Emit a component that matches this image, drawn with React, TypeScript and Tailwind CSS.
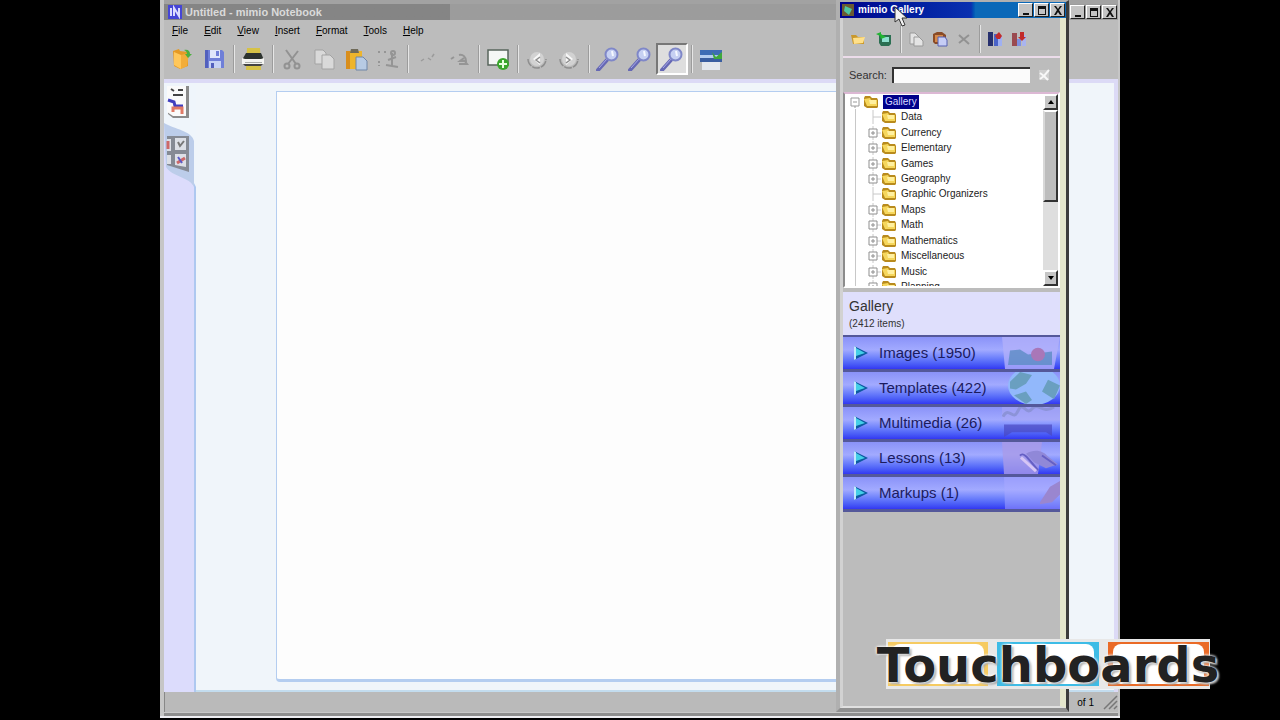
import type { ReactNode } from 'react';
import clsx from 'clsx';

const menus = ['File', 'Edit', 'View', 'Insert', 'Format', 'Tools', 'Help'];

const folders = [
  { name: 'Data', open: false },
  { name: 'Currency', open: true },
  { name: 'Elementary', open: true },
  { name: 'Games', open: true },
  { name: 'Geography', open: true },
  { name: 'Graphic Organizers', open: false },
  { name: 'Maps', open: true },
  { name: 'Math', open: true },
  { name: 'Mathematics', open: true },
  { name: 'Miscellaneous', open: true },
  { name: 'Music', open: true },
  { name: 'Planning', open: true },
];

/* ---------- icons ---------- */

function OpenIcon() {
  return (
    <svg viewBox="0 0 24 24" className="h-6 w-6">
      <path d="M3 4l6-2 1 2 8 1v14l-8 3-6-3z" fill="#e59a25" />
      <path d="M4 5l7 3v14l-7-4z" fill="#ffc75a" />
      <path d="M11 8l8-2-2 13-6 3z" fill="#f2ad3a" />
      <path d="M14 3c4-1 6 1 6 4h2l-4 4-3-4h2c0-2-1-3-3-4z" fill="#4caf3f" />
    </svg>
  );
}

function SaveIcon() {
  return (
    <svg viewBox="0 0 24 24" className="h-6 w-6">
      <path d="M3 3h17l2 2v16H3z" fill="#6f7fd8" />
      <path d="M3 3h3v18H3z" fill="#5260bd" />
      <path d="M8 3h10v8H8z" fill="#dfe6fb" />
      <path d="M14 4h3v5h-3z" fill="#6f7fd8" />
      <path d="M7 14h12v7H7z" fill="#c6d2f5" />
      <path d="M9 16h3v5H9z" fill="#5260bd" />
    </svg>
  );
}

function PrintIcon() {
  return (
    <svg viewBox="0 0 24 24" className="h-6 w-6">
      <path d="M6 1h13l1 22H5z" fill="#d6c246" />
      <path d="M5 6h15l3 7H1z" fill="#2d332f" />
      <path d="M1 11l3 1h16l3-1v6H1z" fill="#f3f3f1" />
      <path d="M4 15h17v1H4z" fill="#a9aca8" />
      <path d="M2 17h20l-2 2H4z" fill="#444" />
    </svg>
  );
}

function CutIcon() {
  return (
    <svg viewBox="0 0 24 24" className="h-6 w-6" fill="none" stroke="#929292" strokeWidth="2">
      <path d="M6 3l10 14M18 4L8 17" />
      <circle cx="7" cy="19" r="2.5" />
      <circle cx="17" cy="19" r="2.5" />
    </svg>
  );
}

function CopyIcon() {
  return (
    <svg viewBox="0 0 24 24" className="h-6 w-6" fill="#d9d9d9" stroke="#a3a3a3">
      <path d="M3 3h8l3 3v11H3z" />
      <path d="M10 8h8l4 4v10H10z" />
    </svg>
  );
}

function PasteIcon() {
  return (
    <svg viewBox="0 0 24 24" className="h-6 w-6">
      <path d="M2 4h16v18H2z" fill="#eeb52c" />
      <path d="M2 4h4v18H2z" fill="#d98e1c" />
      <path d="M7 2h7l1 4H6z" fill="#6f6a58" />
      <path d="M12 10h7l4 4v9H12z" fill="#b7cbe4" stroke="#6f86a8" />
    </svg>
  );
}

function DeletePageIcon() {
  return (
    <svg viewBox="0 0 24 24" className="h-6 w-6" fill="none" stroke="#959595" strokeWidth="2">
      <path d="M3 4v3M3 14v5M9 4v2" strokeDasharray="2 2" />
      <path d="M16 6v14M10 18l12 2M12 13l8-3" />
      <circle cx="17" cy="6" r="2" />
    </svg>
  );
}

function UndoIcon() {
  return (
    <svg viewBox="0 0 24 24" className="h-6 w-6" fill="none" stroke="#9b9b9b" strokeWidth="1.5">
      <path d="M6 14l3-2M13 11l3 2M17 10l2-3" />
    </svg>
  );
}

function RedoIcon() {
  return (
    <svg viewBox="0 0 24 24" className="h-6 w-6" fill="none" stroke="#959595" strokeWidth="2">
      <path d="M4 12l3-2M12 8c4-1 7 2 7 6h-6l4-3M17 13l3 4h-8" />
    </svg>
  );
}

function NewPageIcon() {
  return (
    <svg viewBox="0 0 24 24" className="h-6 w-6">
      <path d="M2 3h20v15H2z" fill="#f5f7f5" stroke="#58655c" strokeWidth="1.5" />
      <circle cx="17" cy="17" r="6" fill="#3aa62c" />
      <path d="M17 13v8M13 17h8" stroke="#e8ffe0" strokeWidth="2" />
    </svg>
  );
}

function TurnIcon({ next = false }: { next?: boolean }) {
  return (
    <svg viewBox="0 0 24 24" className="h-6 w-6">
      <circle cx="12" cy="12" r="7" fill="#d2d2d2" />
      <path d="M3 12a9 9 0 0 0 18 0" fill="none" stroke="#8f8f8f" strokeWidth="1.5" strokeDasharray="8 1" />
      <path d={next ? 'M9 6l7 6-7 6z' : 'M15 6l-7 6 7 6z'} fill="#f8f8f8" />
      <path d={next ? 'M9 10l4 3-4 3' : 'M15 10l-4 3 4 3'} fill="none" stroke="#8f8f8f" strokeWidth="1.5" />
    </svg>
  );
}

function ZoomIcon() {
  return (
    <svg viewBox="0 0 24 24" className="h-6 w-6">
      <path d="M2 23l9-10" stroke="#6668b4" strokeWidth="4" strokeLinecap="round" />
      <path d="M3 21l8-9" stroke="#a7a9e6" strokeWidth="1" />
      <circle cx="15.500" cy="7.500" r="6" fill="#c6d0f2" stroke="#7f87c8" strokeWidth="2" />
      <path d="M16 4l1 5" stroke="#f5f8ff" strokeWidth="2" />
    </svg>
  );
}

function GalleryWindowIcon() {
  return (
    <svg viewBox="0 0 24 24" className="h-6 w-6">
      <path d="M1 3h22v5H1z" fill="#3d6cb5" />
      <path d="M1 8h22v3H1z" fill="#b5cdf0" />
      <path d="M1 11h22v4H1z" fill="#3a5ea0" />
      <path d="M3 15h18v8H3z" fill="#e4e8ee" />
      <path d="M13 5l4 5 6-5v7h-8z" fill="#3ea83b" />
    </svg>
  );
}

function FolderIcon() {
  return (
    <svg viewBox="0 0 16 14" className="h-[14px] w-4 shrink-0">
      <path d="M1 3l1-2h5l2 2h5l1 2v7l-1 1H4l-3-2z" fill="#b98b1d" />
      <path d="M1 4l6-1 1 2h6v6H4z" fill="#f6d75c" />
      <path d="M6 5h7v4H7z" fill="#fff0a0" />
    </svg>
  );
}

function PlayIcon() {
  return (
    <svg viewBox="0 0 16 16" className="h-4 w-4 shrink-0">
      <path d="M1 1l14 7-14 7z" fill="#0d5aa0" />
      <path d="M3 3l9 5-9 3z" fill="#43cfe8" />
      <path d="M1 1l2 1v12l-2 1z" fill="#c2e8ff" />
    </svg>
  );
}

function CollageIcon({ kind }: { kind: string }) {
  return (
    <svg viewBox="0 0 58 33" preserveAspectRatio="none" className="h-full w-[58px]">
      {kind === 'images' && (
        <>
          <path d="M0 0h58l-6 33H3z" fill="#b2b0fa" opacity=".8" />
          <path d="M8 14l10-1 8 5 24-3v14H6z" fill="#5c8cc4" opacity=".8" />
          <circle cx="36" cy="18" r="7" fill="#a977b8" />
        </>
      )}
      {kind === 'templates' && (
        <>
          <ellipse cx="32" cy="14" rx="26" ry="20" fill="#92b8fb" />
          <path d="M8 10L18 0l12 3-6 9-10 6-6-1zM46 8l12 6-6 14-12-8zM12 24l12-4 6 9-6 4z" fill="#6a9fc0" />
        </>
      )}
      {kind === 'multimedia' && (
        <>
          <path d="M0 0h58v14H0z" fill="#a8a6f4" opacity=".6" />
          <path d="M1 10C7-2 11 16 16 4s8 6 14-2 10 6 22-2" fill="none" stroke="#8c93d8" strokeWidth="3" />
          <path d="M2 18h48v12l-6-4H10l-8 5z" fill="#4a48c0" opacity=".7" />
        </>
      )}
      {kind === 'lessons' && (
        <>
          <path d="M0 0h40l-4 33H2z" fill="#a99be8" opacity=".8" />
          <path d="M24 12c10-6 18-2 22 3l10 8-12 4-12-6z" fill="#9088d8" />
          <path d="M18 14c4-5 10 6 18 15M40 14l14 10" fill="none" stroke="#655fc4" strokeWidth="2" />
          <path d="M19 16l15 14" stroke="#d6c5f5" strokeWidth="3" />
        </>
      )}
      {kind === 'markups' && (
        <>
          <path d="M2 0h56v33H3z" fill="#a9a9ff" opacity=".5" />
          <path d="M38 26l10-16 10-6v14l-8 8-12 2z" fill="#9a86cf" />
        </>
      )}
    </svg>
  );
}

/* ---------- small parts ---------- */

function ToolButton({ label, pressed = false, children }: { label: string; pressed?: boolean; children: ReactNode }) {
  return (
    <button
      type="button"
      aria-label={label}
      className={clsx(
        'flex h-8 w-8 shrink-0 items-center justify-center',
        pressed && 'border-2 border-t-[#777] border-l-[#777] border-r-white border-b-white bg-[#dedede]',
      )}
    >
      {children}
    </button>
  );
}

function Separator() {
  return (
    <div className="flex h-7 w-[7px] shrink-0 justify-center">
      <div className="w-[2px] border-l border-[#9c9c9c] bg-[#e6e6e6]" />
    </div>
  );
}

function WindowButtons() {
  const shapes = [
    { label: 'Minimize', d: 'M3 8h6v2H3z' },
    { label: 'Restore', d: 'M2 1h8v9H2zM3 4v5h6V4z' },
    { label: 'Close', d: 'M2 1h2l2 3 2-3h2L7 5l3 5H8L6 7l-2 3H2l3-5z' },
  ];
  return (
    <div className="flex shrink-0 gap-px">
      {shapes.map((shape) => (
        <button
          key={shape.label}
          type="button"
          aria-label={shape.label}
          className="flex h-[14px] w-[15px] items-center justify-center border border-t-white border-l-white border-r-[#222] border-b-[#222] bg-[#c4c4c4]"
        >
          <svg viewBox="0 0 12 11" className="h-[11px] w-3">
            <path d={shape.d} fill="#111" fillRule="evenodd" />
          </svg>
        </button>
      ))}
    </div>
  );
}

function ScrollButton({ up = false }: { up?: boolean }) {
  return (
    <button
      type="button"
      aria-label={up ? 'Scroll up' : 'Scroll down'}
      className="flex h-4 shrink-0 items-center justify-center border-2 border-t-white border-l-white border-r-[#333] border-b-[#333] bg-[#c6c6c6]"
    >
      <svg viewBox="0 0 8 6" className="h-[6px] w-2">
        <path d={up ? 'M4 1l3 4H1z' : 'M4 5L1 1h6z'} fill="#000" />
      </svg>
    </button>
  );
}

/* ---------- notebook window ---------- */

function Notebook() {
  return (
    <div className="flex min-h-0 flex-1 flex-col border-r-2 border-l-4 border-[#c6c6c6] bg-[#bcbcbc]">
      <div className="h-1 shrink-0 bg-[#a2a2a2]" />
      <div className="flex h-4 shrink-0 items-center justify-between bg-linear-to-r from-[#858585] from-30% to-[#9c9c9c] to-30% pr-px pl-1">
        <div className="flex items-center gap-[3px]">
          <svg viewBox="0 0 14 14" className="h-[14px] w-[14px]">
            <path d="M0 0h14v14H0z" fill="#4545d6" />
            <path d="M3 11V3M6 11V3l5 8V3" stroke="#dcdcff" strokeWidth="2" fill="none" />
          </svg>
          <h1 className="text-[11px] leading-4 font-bold text-[#dadada]">Untitled - mimio Notebook</h1>
        </div>
        <WindowButtons />
      </div>

      <nav className="mt-[3px] flex h-4 shrink-0 items-center">
        {menus.map((menu) => (
          <button key={menu} type="button" className="px-2 text-[10px] leading-4 text-black">
            <span className="underline">{menu[0]}</span>
            {menu.slice(1)}
          </button>
        ))}
      </nav>

      <div className="flex h-10 shrink-0 items-center px-[2px]">
        <ToolButton label="Open"><OpenIcon /></ToolButton>
        <ToolButton label="Save"><SaveIcon /></ToolButton>
        <Separator />
        <ToolButton label="Print"><PrintIcon /></ToolButton>
        <Separator />
        <ToolButton label="Cut"><CutIcon /></ToolButton>
        <ToolButton label="Copy"><CopyIcon /></ToolButton>
        <ToolButton label="Paste"><PasteIcon /></ToolButton>
        <ToolButton label="Delete"><DeletePageIcon /></ToolButton>
        <Separator />
        <ToolButton label="Undo"><UndoIcon /></ToolButton>
        <ToolButton label="Redo"><RedoIcon /></ToolButton>
        <Separator />
        <ToolButton label="New page"><NewPageIcon /></ToolButton>
        <Separator />
        <ToolButton label="Previous page"><TurnIcon /></ToolButton>
        <ToolButton label="Next page"><TurnIcon next /></ToolButton>
        <Separator />
        <ToolButton label="Zoom in"><ZoomIcon /></ToolButton>
        <ToolButton label="Zoom out"><ZoomIcon /></ToolButton>
        <ToolButton label="Zoom to page" pressed><ZoomIcon /></ToolButton>
        <Separator />
        <ToolButton label="Gallery"><GalleryWindowIcon /></ToolButton>
      </div>

      <div className="flex min-h-0 flex-1 border-t-4 border-r-4 border-[#dcdaf6]">
        <aside className="flex w-8 shrink-0 flex-col border-r-2 border-[#aec8f0] bg-[#dcdcfc]">
          <button type="button" aria-label="Page view" className="h-10 w-8 bg-[#eff5fb]">
            <svg viewBox="0 0 32 40" className="h-10 w-8">
              <path d="M4 3h21v32H9l-5-4z" fill="#8b8b8b" />
              <path d="M3 3h19v30H9l-6-4z" fill="#fafafa" />
              <path d="M7 6l3 2M14 7h5M9 12h10" stroke="#444" strokeWidth="2" />
              <path d="M4 17l6 2 1 4h8" stroke="#3f3fbf" strokeWidth="3" fill="none" />
              <path d="M9 29v-4h9v6" stroke="#e07a66" strokeWidth="3" fill="none" />
            </svg>
          </button>
          <button type="button" aria-label="Page sorter" className="h-16 w-8">
            <svg viewBox="0 0 32 64" className="h-16 w-8">
              <path d="M0 0h32v64z" fill="#eff5fb" />
              <path d="M0 0c10 6 28 8 30 18v46C26 54 8 54 2 44z" fill="#bccdea" />
              <path d="M3 13h22v36L3 42z" fill="#858a94" />
              <path d="M3 16h4v12H3zM11 15h11v12H11zM3 32h4v9H3zM11 31h11v13l-11-2z" fill="#dcdfe6" />
              <path d="M4 18v8M13 40l8-5" stroke="#cc6868" strokeWidth="3" />
              <path d="M14 34l4 6" stroke="#5a5ac8" strokeWidth="2" />
              <path d="M14 19l2 4 4-5" stroke="#777" strokeWidth="2" fill="none" />
            </svg>
          </button>
        </aside>
        <main className="flex flex-1 border-b-2 border-[#c3dcee] bg-[#f0f5fa] pt-2 pr-28 pb-2 pl-20">
          <div className="flex-1 rounded-b-sm border border-b-[3px] border-[#b4cdf0] bg-[#fdfdfd]" />
        </main>
      </div>

      <footer className="flex h-5 shrink-0 items-center justify-end gap-2 border-l border-[#888] bg-[#bababa] text-[10px] text-black">
        <span>of 1</span>
        <svg viewBox="0 0 16 16" className="h-4 w-4" stroke="#777" strokeWidth="1.5">
          <path d="M15 2L2 15M15 7l-8 8M15 12l-3 3" />
        </svg>
      </footer>
      <div className="h-1 shrink-0 border-t border-[#c8c8c8] bg-[#8e8e8e]" />
    </div>
  );
}

/* ---------- gallery window ---------- */

function GalleryToolbar() {
  return (
    <div className="flex h-9 shrink-0 items-center border-b-2 border-[#ecdcea] px-[2px]">
      <button type="button" aria-label="Open folder" className="flex w-[26px] justify-center">
        <svg viewBox="0 0 16 16" className="h-4 w-4">
          <path d="M1 4h5l2 2h6v7H3z" fill="#c9982c" />
          <path d="M3 7l12-1-2 6-9 1z" fill="#ffe08a" />
        </svg>
      </button>
      <button type="button" aria-label="Import" className="flex w-[26px] justify-center">
        <svg viewBox="0 0 16 16" className="h-4 w-4">
          <path d="M3 4h12v9l-2 2H5l-2-3z" fill="#2b6f52" />
          <path d="M6 6h7v5H6z" fill="#8fe0cf" />
          <path d="M0 3l5-2v2l5 3-5 2-1-3z" fill="#22b532" />
        </svg>
      </button>
      <Separator />
      <button type="button" aria-label="Copy item" className="flex w-6 justify-center">
        <svg viewBox="0 0 16 16" className="h-4 w-4" fill="#e4e4e4" stroke="#999">
          <path d="M2 2h5l4 4v7H2z" />
          <path d="M6 6h5l4 4v5H6z" />
        </svg>
      </button>
      <button type="button" aria-label="Paste item" className="flex w-6 justify-center">
        <svg viewBox="0 0 16 16" className="h-4 w-4">
          <path d="M1 3l4-2h5l4 3v9H3l-2-2z" fill="#8a4b26" />
          <path d="M3 4h8v7H3z" fill="#d68a4a" />
          <path d="M6 6h7l2 3v6H6z" fill="#c6cdf5" stroke="#5660b0" />
        </svg>
      </button>
      <button type="button" aria-label="Delete item" className="flex w-6 justify-center">
        <svg viewBox="0 0 16 16" className="h-4 w-4" stroke="#929292" strokeWidth="2">
          <path d="M3 4l10 9M13 4L3 12" />
        </svg>
      </button>
      <Separator />
      <button type="button" aria-label="Find previous" className="flex w-6 justify-center">
        <svg viewBox="0 0 16 16" className="h-4 w-4">
          <path d="M1 1h5v14H1z" fill="#27306e" />
          <path d="M7 3h4v12H7z" fill="#4a63c8" />
          <path d="M11 5h4v10h-4z" fill="#9fb0f2" />
          <path d="M8 5l4-4 3 4-2 3h-3z" fill="#c22a2a" />
        </svg>
      </button>
      <button type="button" aria-label="Find next" className="flex w-6 justify-center">
        <svg viewBox="0 0 16 16" className="h-4 w-4">
          <path d="M1 2h5v13H1z" fill="#9a4a50" />
          <path d="M6 8h4v7H6z" fill="#7d8fe0" />
          <path d="M11 4h4v11h-4z" fill="#a9b4ee" />
          <path d="M9 1h4v5h2l-4 4-4-4h2z" fill="#c22a2a" />
        </svg>
      </button>
    </div>
  );
}

function Tree() {
  return (
    <div className="flex h-[196px] shrink-0 overflow-hidden border-2 border-t-[#dcb8d4] border-r-white border-b-white border-l-[#8c8c8c] bg-white">
      <div className="min-w-0 flex-1 overflow-hidden pl-1">
        {/* taller than the box, so the last row is half scrolled out */}
        <ul className="grid h-[201px] auto-rows-fr text-[10px] leading-[14px] text-[#1c1c1c]">
          <li className="flex min-h-0 items-center">
            <svg viewBox="0 0 14 12" className="h-3 w-[14px] shrink-0" fill="none" stroke="#999">
              <path d="M2 2h8v8H2zM4 6h4M6 10v2" />
            </svg>
            <FolderIcon />
            <span className="ml-1 bg-[#00008a] px-[2px] text-[#d8d8ff]">Gallery</span>
          </li>
          {folders.map((folder) => (
            <li key={folder.name} className="ml-[6px] flex min-h-0 items-center border-l border-[#c8c8c8] pl-[11px]">
              <svg viewBox="0 0 14 14" className="h-[14px] w-[14px] shrink-0" fill="none" stroke="#8f8f8f">
                <path d="M6 0v14M6 7h8" stroke="#c8c8c8" />
                {folder.open && <path d="M2 3h8v8H2zM4 7h4M6 5v4" fill="#fff" />}
              </svg>
              <FolderIcon />
              <span className="ml-1 whitespace-nowrap">{folder.name}</span>
            </li>
          ))}
        </ul>
      </div>
      <div className="flex w-[15px] flex-col bg-[#dedede]">
        <ScrollButton up />
        <div className="h-[92px] border-2 border-t-white border-r-[#333] border-b-[#333] border-l-[#d8d8d8] bg-[#bdbdbd]" />
        <div className="flex-1" />
        <ScrollButton />
      </div>
    </div>
  );
}

function Category({ label, kind }: { label: string; kind: string }) {
  return (
    <button
      type="button"
      className="flex h-[35px] w-full shrink-0 items-center border-b-[3px] border-[#54589a] bg-linear-to-b from-[#8a92f8] via-[#a2aaff] via-40% to-[#3436f2] pl-[10px] text-[15px] text-[#1b1b5e]"
    >
      <PlayIcon />
      <span className="flex-1 pl-[10px] text-left">{label}</span>
      <CollageIcon kind={kind} />
    </button>
  );
}

function Gallery() {
  return (
    <section className="absolute top-0 right-[51px] bottom-[6px] flex w-[233px] flex-col border-t-2 border-r-[3px] border-b-4 border-l-4 border-t-[#b0b0b0] border-r-[#3c3c3c] border-b-[#909090] border-l-[#b0b0b0] bg-[#bcbcbc]">
      <div className="flex h-4 shrink-0 items-center justify-between bg-linear-to-r from-[#00008c] via-[#0a30b0] via-58% to-[#0a68b8] to-60% pr-px pl-[2px]">
        <div className="flex items-center gap-1">
          <svg viewBox="0 0 12 12" className="h-3 w-3">
            <path d="M0 0h12v12H0z" fill="#6b5a32" />
            <path d="M3 2l7 3-3 6-5-4z" fill="#4fc5a0" />
          </svg>
          <h2 className="text-[10px] leading-4 font-bold text-white">mimio Gallery</h2>
        </div>
        <WindowButtons />
      </div>
      <div className="flex min-h-0 flex-1 flex-col border-r-[6px] border-b-2 border-l-[3px] border-r-[#e4e6cc] border-b-[#e0e0e0] border-l-[#d2d2d2] pt-1">
        <GalleryToolbar />
        <div className="flex h-[34px] shrink-0 items-center px-[6px]">
          <label htmlFor="search" className="w-[43px] text-[11px] leading-4 text-[#333]">Search:</label>
          <input
            id="search"
            type="text"
            className="h-4 min-w-0 flex-1 border-t-2 border-l-2 border-[#333] bg-[#fbfbfb] px-1 text-[11px]"
          />
          <button type="button" aria-label="Clear search" className="flex w-6 justify-end pr-1">
            <svg viewBox="0 0 12 12" className="h-3 w-3">
              <path d="M1 1h10v10H1z" fill="#cfcfcf" />
              <path d="M2 4l4 3 5-6M2 10l4-3 4 4" stroke="#f8f8f8" strokeWidth="2" fill="none" />
            </svg>
          </button>
        </div>
        <Tree />
        <div className="mt-1 flex h-[45px] shrink-0 flex-col justify-center border-b-2 border-[#54589a] bg-[#dfdffc] px-[6px]">
          <h3 className="text-[14px] leading-5 text-[#333]">Gallery</h3>
          <p className="text-[10px] leading-4 text-[#333]">(2412 items)</p>
        </div>
        <Category label="Images (1950)" kind="images" />
        <Category label="Templates (422)" kind="templates" />
        <Category label="Multimedia (26)" kind="multimedia" />
        <Category label="Lessons (13)" kind="lessons" />
        <Category label="Markups (1)" kind="markups" />
      </div>
      {/* mouse pointer over the title bar */}
      <svg viewBox="0 0 14 22" className="absolute top-1 left-[54px] h-[22px] w-[14px]">
        <path d="M1 1v15l4-3 3 7 3-1-3-7h5z" fill="#f2f2f2" stroke="#333" />
      </svg>
    </section>
  );
}

function Logo() {
  return (
    <div className="absolute right-[-104px] bottom-[27px] flex h-[53px] w-[352px] items-center justify-center">
      <svg viewBox="0 0 352 53" className="absolute inset-0 h-full w-full">
        <path d="M14 1h324v50H14z" fill="#e8e8e8" />
        <path d="M16 4h100v44H16z" fill="#f6cb62" />
        <path d="M125 4h102v44H125z" fill="#3dbce6" />
        <path d="M236 4h101v44H236z" fill="#ea6a26" />
        <rect x="20" y="6" width="92" height="40" rx="8" fill="#fff" />
        <rect x="130" y="6" width="92" height="40" rx="8" fill="#fff" />
        <rect x="241" y="6" width="91" height="40" rx="8" fill="#fff" />
      </svg>
      <span className="relative font-['DejaVu_Sans',sans-serif] text-[48px] leading-none font-bold text-[#222] [text-shadow:0_0_3px_#fff,0_0_3px_#fff,2px_2px_2px_#999]">
        Touchboards
      </span>
    </div>
  );
}

export default function App() {
  return (
    <div className="h-screen overflow-hidden bg-black font-['Liberation_Sans',Arial,sans-serif]">
      <div className="relative mx-auto flex h-full w-3/4 flex-col border-b-2 border-black">
        <Notebook />
        <div className="h-[2px] shrink-0 bg-[#eeeef2]" />
        <Gallery />
        <Logo />
      </div>
    </div>
  );
}
